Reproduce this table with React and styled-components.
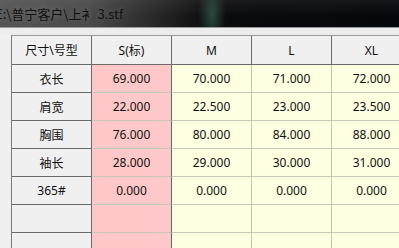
import React from 'react'
import styled, { createGlobalStyle } from 'styled-components'

const GlobalStyle = createGlobalStyle`
  html, body {
    margin: 0;
    padding: 0;
    background: #f0f0f0;
  }
  body {
    font-family: "Noto Sans", "Noto Sans CJK SC", sans-serif;
  }
`

const Window = styled.div`
  width: 399px;
  height: 248px;
  overflow: hidden;
  display: flex;
  flex-direction: column;
  background: #f0f0f0;
`

const TitleBar = styled.div`
  height: 27px;
  flex: none;
  display: flex;
  align-items: center;
  overflow: hidden;
  background:
    radial-gradient(ellipse 14px 40px at 212px 14px, rgba(70, 120, 100, 0.55), rgba(0, 0, 0, 0) 100%),
    linear-gradient(180deg, rgba(255, 255, 255, 0.06), rgba(0, 0, 0, 0) 60%),
    linear-gradient(90deg, #555 0%, #4a4a4a 22%, #2a2a2a 38%, #0c0c0e 52%, #04070b 100%);
`

const Title = styled.span`
  margin-left: -5px;
  font-family: "Noto Sans CJK SC", "Noto Sans", sans-serif;
  font-size: 13px;
  color: #111;
  white-space: nowrap;
  text-shadow: 0 0 6px rgba(200, 200, 200, 0.35);
`

const Strip = styled.div`
  height: 8px;
  flex: none;
  box-sizing: border-box;
  border-top: 1px solid #9a9a9a;
  background: #ececec;
`

const Sheet = styled.div`
  padding-left: 11px;
  flex: 1;
  overflow: hidden;
`

const Grid = styled.div`
  display: grid;
  grid-template-columns: repeat(5, 80px);
  grid-template-rows: 29px repeat(7, 28px);
  width: 400px;
  box-sizing: border-box;
  border-left: 1px solid #7a7a7a;
  border-top: 1px solid #9a9a9a;
`

const Cell = styled.div`
  box-sizing: border-box;
  display: flex;
  align-items: center;
  justify-content: center;
  font-size: 12px;
  color: #111;
  white-space: nowrap;
  background: ${(p) => (p.kind === 'fixed' ? '#f0f0f0' : p.kind === 'std' ? '#ffc8c8' : '#ffffe1')};
  border-right: 1px solid ${(p) => (p.kind === 'fixed' || p.head ? '#6a6a6a' : '#c4c4b4')};
  border-bottom: 1px solid ${(p) => (p.kind === 'fixed' ? '#6a6a6a' : '#c8c4b8')};
`

const sizes = ['S(标)', 'M', 'L', 'XL']

const rows = [
  { name: '衣长', values: ['69.000', '70.000', '71.000', '72.000'] },
  { name: '肩宽', values: ['22.000', '22.500', '23.000', '23.500'] },
  { name: '胸围', values: ['76.000', '80.000', '84.000', '88.000'] },
  { name: '袖长', values: ['28.000', '29.000', '30.000', '31.000'] },
  { name: '365#', values: ['0.000', '0.000', '0.000', '0.000'] },
  { name: '', values: ['', '', '', ''] },
  { name: '', values: ['', '', '', ''] }
]

export default function App() {
  return (
    <>
      <GlobalStyle />
      <Window>
        <TitleBar>
          <Title>E:\普宁客户\上衤 3.stf</Title>
        </TitleBar>
        <Strip />
        <Sheet>
          <Grid>
            <Cell kind="fixed">尺寸\号型</Cell>
            {sizes.map((s) => (
              <Cell key={s} kind="fixed">{s}</Cell>
            ))}
            {rows.map((r, i) => (
              <React.Fragment key={i}>
                <Cell kind="fixed">{r.name}</Cell>
                {r.values.map((v, j) => (
                  <Cell key={j} kind={j === 0 ? 'std' : 'size'} head={j === 0}>{v}</Cell>
                ))}
              </React.Fragment>
            ))}
          </Grid>
        </Sheet>
      </Window>
    </>
  )
}
